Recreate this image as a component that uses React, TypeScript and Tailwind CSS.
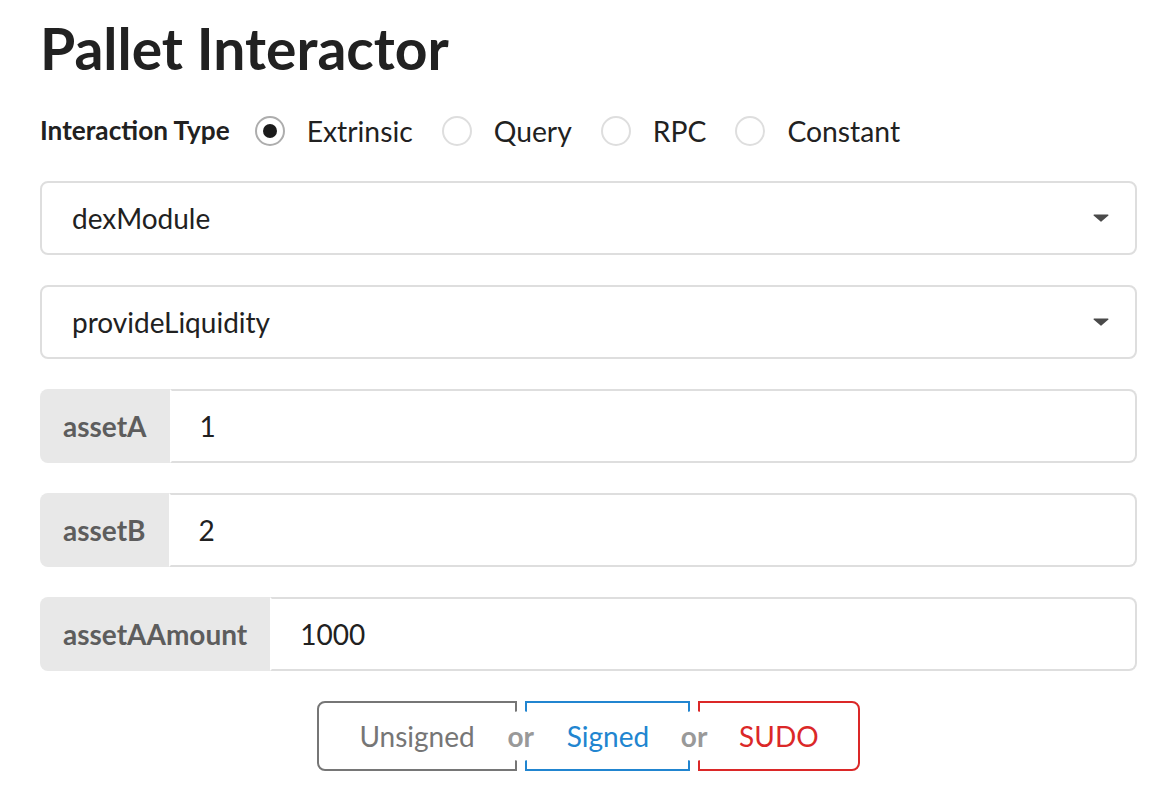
const fontStack = "font-['Lato','Open_Sans','Liberation_Sans',sans-serif]"

function Radio({ label, checked }: { label: string; checked?: boolean }) {
    return (
        <label className="flex items-center">
            <span
                className={
                    checked
                        ? "flex h-[30px] w-[30px] items-center justify-center rounded-full border-2 border-[#adadad] bg-white"
                        : "flex h-[30px] w-[30px] items-center justify-center rounded-full border-2 border-[#dedede] bg-white"
                }
            >
                {checked && <span className="h-[14px] w-[14px] rounded-full bg-[#1b1b1b]" />}
            </span>
            <span className="ml-[22px] text-[28.3px] text-[#212121]">{label}</span>
        </label>
    )
}

function Dropdown({ value }: { value: string }) {
    return (
        <div className="flex h-[74px] items-center justify-between rounded-[8px] border-2 border-[#dedede] bg-white pl-[30px] pr-[26px]">
            <span className="text-[28px] text-[#212121]">{value}</span>
            <svg width="16" height="8" viewBox="0 0 16 8">
                <path d="M1 0.5h14a0.6 0.6 0 0 1 0.4 1L8.4 7.6a0.6 0.6 0 0 1-0.8 0L0.6 1.5A0.6 0.6 0 0 1 1 0.5z" fill="#4a4a4a" />
            </svg>
        </div>
    )
}

function LabeledInput({ label, value }: { label: string; value: string }) {
    return (
        <div className="flex h-[74px]">
            <div className="flex items-center rounded-l-[8px] bg-[#e8e8e8] px-[23px] text-[28px] font-bold text-[#5d5d5d]">
                {label}
            </div>
            <div className="flex flex-1 items-center rounded-r-[8px] border-2 border-[#dedede] border-l-transparent bg-white pl-[28px]">
                <span className="text-[28px] text-[#212121]">{value}</span>
            </div>
        </div>
    )
}

function Or() {
    return (
        <div className="relative z-10 w-[8px]">
            <span className="absolute left-1/2 top-1/2 flex h-[50px] w-[50px] -translate-x-1/2 -translate-y-1/2 items-center justify-center rounded-full bg-white text-[28px] font-bold text-[#999999]">
                or
            </span>
        </div>
    )
}

export default function App() {
    return (
        <div className={`min-h-screen bg-white pl-[40px] pr-[27px] pt-[12px] text-[#212121] ${fontStack}`}>
            <h1 className="text-[57px] font-bold leading-[72px]">Pallet Interactor</h1>

            <div className="mt-[27px] flex h-[40px] items-center">
                <span className="mr-[25px] text-[26.2px] font-bold">Interaction Type</span>
                <div className="flex items-center gap-[29px]">
                    <Radio label="Extrinsic" checked />
                    <Radio label="Query" />
                    <Radio label="RPC" />
                    <Radio label="Constant" />
                </div>
            </div>

            <div className="mt-[30px] flex flex-col gap-[30px]">
                <Dropdown value="dexModule" />
                <Dropdown value="provideLiquidity" />
                <LabeledInput label="assetA" value="1" />
                <LabeledInput label="assetB" value="2" />
                <LabeledInput label="assetAAmount" value="1000" />
            </div>

            <div className="mt-[30px] flex justify-center">
                <div className="flex h-[70px] text-[28px]">
                    <button className="rounded-l-[8px] border-2 border-[#767676] px-[40px] text-[#767676]">Unsigned</button>
                    <Or />
                    <button className="border-2 border-[#2185d0] pl-[40px] pr-[39px] text-[#2185d0]">Signed</button>
                    <Or />
                    <button className="rounded-r-[8px] border-2 border-[#db2828] px-[39px] text-[#db2828]">SUDO</button>
                </div>
            </div>
        </div>
    )
}
